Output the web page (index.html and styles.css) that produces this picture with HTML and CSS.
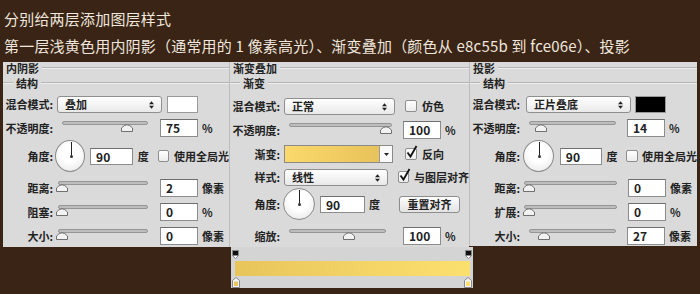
FILE: index.html
```html
<!DOCTYPE html>
<html lang="zh">
<head>
    <meta charset="UTF-8">
    <title>图层样式</title>
    <link rel="stylesheet" href="styles.css">
</head>
<body>
    <div class="title">
        <p>分别给两层添加图层样式</p>
        <p>第一层浅黄色用内阴影（通常用的 1 像素高光）、渐变叠加（颜色从 e8c55b 到 fce06e）、投影</p>
    </div>

    <div class="panels">
        <!-- 内阴影 -->
        <div class="panel inner">
            <div class="head"><span>内阴影</span></div>
            <div class="legend"><span>结构</span></div>
            <div class="row">
                <span class="lbl">混合模式:</span>
                <div class="sel">叠加<svg class="arrows" width="5" height="8" viewBox="0 0 5 8"><path d="M0 3.2 L2.5 0.2 L5 3.2Z M0 4.8 L2.5 7.8 L5 4.8Z" fill="#222"/></svg></div>
                <div class="swatch"></div>
            </div>
            <div class="row">
                <span class="lbl">不透明度:</span>
                <div class="slider op"><div class="track"></div><svg class="thumb" style="left:76%" width="12" height="9" viewBox="0 0 12 9"><path d="M0.5 8.5 V5 Q6 -1.5 11.5 5 V8.5Z" fill="#f2f2f2" stroke="#6f6f6f"/></svg></div>
                <div class="num">75</div>
                <span class="unit">%</span>
            </div>
            <div class="row tall">
                <span class="lbl">角度:</span>
                <div class="dial"><i class="hand"></i><i class="dot"></i></div>
                <div class="num angle">90</div>
                <span class="deg">度</span>
                <div class="check"></div>
                <span class="ctext">使用全局光</span>
            </div>
            <div class="row">
                <span class="lbl">距离:</span>
                <div class="slider"><div class="track"></div><svg class="thumb" style="left:4%" width="12" height="9" viewBox="0 0 12 9"><path d="M0.5 8.5 V5 Q6 -1.5 11.5 5 V8.5Z" fill="#f2f2f2" stroke="#6f6f6f"/></svg></div>
                <div class="num">2</div>
                <span class="unit">像素</span>
            </div>
            <div class="row">
                <span class="lbl">阻塞:</span>
                <div class="slider"><div class="track"></div><svg class="thumb" style="left:4%" width="12" height="9" viewBox="0 0 12 9"><path d="M0.5 8.5 V5 Q6 -1.5 11.5 5 V8.5Z" fill="#f2f2f2" stroke="#6f6f6f"/></svg></div>
                <div class="num">0</div>
                <span class="unit">%</span>
            </div>
            <div class="row">
                <span class="lbl">大小:</span>
                <div class="slider"><div class="track"></div><svg class="thumb" style="left:4%" width="12" height="9" viewBox="0 0 12 9"><path d="M0.5 8.5 V5 Q6 -1.5 11.5 5 V8.5Z" fill="#f2f2f2" stroke="#6f6f6f"/></svg></div>
                <div class="num">0</div>
                <span class="unit">像素</span>
            </div>
        </div>

        <!-- 渐变叠加 -->
        <div class="col">
            <div class="panel middle">
                <div class="head"><span>渐变叠加</span></div>
                <div class="legend"><span>渐变</span></div>
                <div class="row first">
                    <span class="lbl">混合模式:</span>
                    <div class="sel">正常<svg class="arrows" width="5" height="8" viewBox="0 0 5 8"><path d="M0 3.2 L2.5 0.2 L5 3.2Z M0 4.8 L2.5 7.8 L5 4.8Z" fill="#222"/></svg></div>
                    <div class="check"></div>
                    <span class="ctext">仿色</span>
                </div>
                <div class="row">
                    <span class="lbl">不透明度:</span>
                    <div class="slider op"><div class="track"></div><svg class="thumb" style="left:94%" width="12" height="9" viewBox="0 0 12 9"><path d="M0.5 8.5 V5 Q6 -1.5 11.5 5 V8.5Z" fill="#f2f2f2" stroke="#6f6f6f"/></svg></div>
                    <div class="num">100</div>
                    <span class="unit">%</span>
                </div>
                <div class="row">
                    <span class="lbl">渐变:</span>
                    <div class="grad"><div class="grad-fill"></div><div class="grad-drop"><svg width="5" height="3" viewBox="0 0 5 3"><path d="M0 0 H5 L2.5 3Z" fill="#222"/></svg></div></div>
                    <div class="check on"><svg width="13" height="14" viewBox="0 0 13 14"><path d="M2.5 7.5 L5.5 11.5 L11.5 1" fill="none" stroke="#111" stroke-width="1.8"/></svg></div>
                    <span class="ctext">反向</span>
                </div>
                <div class="row short">
                    <span class="lbl">样式:</span>
                    <div class="sel">线性<svg class="arrows" width="5" height="8" viewBox="0 0 5 8"><path d="M0 3.2 L2.5 0.2 L5 3.2Z M0 4.8 L2.5 7.8 L5 4.8Z" fill="#222"/></svg></div>
                    <div class="check on"><svg width="13" height="14" viewBox="0 0 13 14"><path d="M2.5 7.5 L5.5 11.5 L11.5 1" fill="none" stroke="#111" stroke-width="1.8"/></svg></div>
                    <span class="ctext">与图层对齐</span>
                </div>
                <div class="row tall">
                    <span class="lbl">角度:</span>
                    <div class="dial"><i class="hand"></i><i class="dot"></i></div>
                    <div class="num angle">90</div>
                    <span class="deg">度</span>
                    <div class="btn">重置对齐</div>
                </div>
                <div class="row">
                    <span class="lbl">缩放:</span>
                    <div class="slider op"><div class="track"></div><svg class="thumb" style="left:62%" width="12" height="9" viewBox="0 0 12 9"><path d="M0.5 8.5 V5 Q6 -1.5 11.5 5 V8.5Z" fill="#f2f2f2" stroke="#6f6f6f"/></svg></div>
                    <div class="num">100</div>
                    <span class="unit">%</span>
                </div>
            </div>
            <div class="strip">
                <div class="stops">
                    <svg width="7" height="9" viewBox="0 0 7 9"><rect x="0.5" y="0.5" width="6" height="5" fill="#111" stroke="#888"/><path d="M0.5 5.5 H6.5 L3.5 8.5Z" fill="#fff" stroke="#888"/></svg>
                    <svg width="7" height="9" viewBox="0 0 7 9"><rect x="0.5" y="0.5" width="6" height="5" fill="#111" stroke="#888"/><path d="M0.5 5.5 H6.5 L3.5 8.5Z" fill="#fff" stroke="#888"/></svg>
                </div>
                <div class="bar"></div>
                <div class="stops low">
                    <svg width="8" height="11" viewBox="0 0 8 11"><path d="M0.5 10.5 V3.5 L4 0.5 L7.5 3.5 V10.5Z" fill="#f4f4f4" stroke="#888"/><rect x="2" y="4.5" width="4" height="4.5" fill="#e8c55b"/></svg>
                    <svg width="8" height="11" viewBox="0 0 8 11"><path d="M0.5 10.5 V3.5 L4 0.5 L7.5 3.5 V10.5Z" fill="#f4f4f4" stroke="#888"/><rect x="2" y="4.5" width="4" height="4.5" fill="#fce06e"/></svg>
                </div>
            </div>
        </div>

        <!-- 投影 -->
        <div class="panel shadow">
            <div class="head"><span>投影</span></div>
            <div class="legend"><span>结构</span></div>
            <div class="row">
                <span class="lbl">混合模式:</span>
                <div class="sel">正片叠底<svg class="arrows" width="5" height="8" viewBox="0 0 5 8"><path d="M0 3.2 L2.5 0.2 L5 3.2Z M0 4.8 L2.5 7.8 L5 4.8Z" fill="#222"/></svg></div>
                <div class="swatch black"></div>
            </div>
            <div class="row">
                <span class="lbl">不透明度:</span>
                <div class="slider op"><div class="track"></div><svg class="thumb" style="left:14%" width="12" height="9" viewBox="0 0 12 9"><path d="M0.5 8.5 V5 Q6 -1.5 11.5 5 V8.5Z" fill="#f2f2f2" stroke="#6f6f6f"/></svg></div>
                <div class="num">14</div>
                <span class="unit">%</span>
            </div>
            <div class="row tall">
                <span class="lbl">角度:</span>
                <div class="dial"><i class="hand"></i><i class="dot"></i></div>
                <div class="num angle">90</div>
                <span class="deg">度</span>
                <div class="check"></div>
                <span class="ctext">使用全局光</span>
            </div>
            <div class="row">
                <span class="lbl">距离:</span>
                <div class="slider"><div class="track"></div><svg class="thumb" style="left:5%" width="12" height="9" viewBox="0 0 12 9"><path d="M0.5 8.5 V5 Q6 -1.5 11.5 5 V8.5Z" fill="#f2f2f2" stroke="#6f6f6f"/></svg></div>
                <div class="num">0</div>
                <span class="unit">像素</span>
            </div>
            <div class="row">
                <span class="lbl">扩展:</span>
                <div class="slider"><div class="track"></div><svg class="thumb" style="left:5%" width="12" height="9" viewBox="0 0 12 9"><path d="M0.5 8.5 V5 Q6 -1.5 11.5 5 V8.5Z" fill="#f2f2f2" stroke="#6f6f6f"/></svg></div>
                <div class="num">0</div>
                <span class="unit">%</span>
            </div>
            <div class="row">
                <span class="lbl">大小:</span>
                <div class="slider op"><div class="track"></div><svg class="thumb" style="left:17%" width="12" height="9" viewBox="0 0 12 9"><path d="M0.5 8.5 V5 Q6 -1.5 11.5 5 V8.5Z" fill="#f2f2f2" stroke="#6f6f6f"/></svg></div>
                <div class="num">27</div>
                <span class="unit">像素</span>
            </div>
        </div>
    </div>
</body>
</html>
```

FILE: styles.css
```css
body {
    margin: 0;
    background: #3a2416;
    font-family: "Noto Sans CJK SC", "Liberation Sans", sans-serif;
    overflow: hidden;
}

.title {
    padding: 5px 0 0 4px;
    color: #efe7dd;
    font-size: 15px;
    line-height: 27px;
    letter-spacing: 0.2px;
}
.title p {
    margin: 0;
    white-space: nowrap;
}

.panels {
    display: flex;
    align-items: flex-start;
    margin: 3px 0 0 3px;
}

.panel {
    background: #dadada;
    height: 185px;
    box-sizing: border-box;
    font-size: 11px;
    font-weight: bold;
    color: #222222;
    white-space: nowrap;
}
.inner { width: 226px; }
.col { width: 240px; }
.middle {
    width: 240px;
    border-left: 1px solid #bcbcbc;
}
.shadow {
    width: 228px;
    height: 184px;
    border-left: 1px solid #bcbcbc;
}

/* headers and legends with rules */
.head {
    display: flex;
    align-items: center;
    height: 12px;
    line-height: 12px;
    padding-left: 3px;
}
.head::after, .legend::after, .legend::before {
    content: "";
    border-top: 1px solid #b4b4b4;
    border-bottom: 1px solid #eeeeee;
}
.head::after {
    flex: 1;
    margin-left: 3px;
}
.legend {
    display: flex;
    align-items: center;
    height: 18px;
}
.legend::before {
    width: 10px;
    margin-right: 3px;
}
.legend::after {
    flex: 1;
    margin-left: 3px;
}

/* rows */
.row {
    display: flex;
    align-items: center;
    height: 24px;
}
.row.tall {
    height: 32px;
    margin-bottom: 4px;
}
.row.short { height: 22px; }
.middle .row.first { margin-top: 2px; }

.lbl {
    width: 50px;
    flex: none;
    text-align: right;
}

.sel {
    position: relative;
    margin-left: 4px;
    width: 105px;
    height: 17px;
    box-sizing: border-box;
    border: 1px solid #8f8f8f;
    border-radius: 3px;
    background: linear-gradient(#ffffff, #e9e9e9);
    padding-left: 7px;
    line-height: 15px;
}
.arrows {
    position: absolute;
    right: 7px;
    top: 4px;
}

.swatch {
    margin-left: 5px;
    width: 31px;
    height: 17px;
    box-sizing: border-box;
    border: 1px solid #9a9a9a;
    background: #ffffff;
}
.swatch.black { background: #000000; }

.slider {
    position: relative;
    margin-left: 5px;
    width: 90px;
    height: 11px;
    align-self: center;
    margin-bottom: 5px;
}
.slider.op {
    margin-left: 9px;
    width: 86px;
}
.track {
    height: 4px;
    margin-top: 1px;
    box-sizing: border-box;
    border: 1px solid #959595;
    border-radius: 2px;
    background: #bdbdbd;
}
.thumb {
    position: absolute;
    top: 3px;
    transform: translateX(-50%);
}

.num {
    margin-left: 12px;
    width: 38px;
    height: 18px;
    box-sizing: border-box;
    border: 1px solid #8c8c8c;
    border-top-color: #6f6f6f;
    background: #ffffff;
    padding-left: 5px;
    font-size: 12px;
    line-height: 16px;
}
.num.angle {
    margin-left: 5px;
    width: 45px;
    height: 17px;
    line-height: 15px;
}
.unit { margin-left: 4px; }
.deg { margin-left: 5px; }

.dial {
    position: relative;
    margin-left: 2px;
    width: 32px;
    height: 32px;
    box-sizing: border-box;
    border: 1px solid #8a8a8a;
    border-radius: 50%;
    background: radial-gradient(circle at 50% 40%, #ffffff 40%, #e2e2e2);
}
.hand {
    position: absolute;
    left: 15px;
    top: 1px;
    width: 1px;
    height: 14px;
    background: #222;
}
.dot {
    position: absolute;
    left: 14px;
    top: 14px;
    width: 3px;
    height: 3px;
    border-radius: 50%;
    background: #333;
}

.check {
    position: relative;
    margin-left: 9px;
    width: 12px;
    height: 12px;
    box-sizing: border-box;
    border: 1px solid #8e8e8e;
    border-radius: 2px;
    background: linear-gradient(#ffffff, #ececec);
}
.check svg {
    position: absolute;
    left: -1px;
    top: -4px;
}
.ctext { margin-left: 5px; }

.btn {
    margin-left: 19px;
    width: 61px;
    height: 17px;
    box-sizing: border-box;
    border: 1px solid #8d8d8d;
    border-radius: 3px;
    background: linear-gradient(#fdfdfd, #e3e3e3);
    text-align: center;
    line-height: 15px;
}

/* panel-specific spacing */
.middle .sel { width: 111px; }
.middle .sel + .check { margin-left: 10px; }
.middle .slider.op { width: 103px; }
.middle .slider + .num { margin-left: 11px; }
.middle .row:last-child .slider { width: 97px; }
.middle .row:last-child .num { margin-left: 17px; }
.middle .dial { margin-left: 3px; }
.middle .deg { margin-left: 4px; }

.grad {
    display: flex;
    margin-left: 4px;
    width: 109px;
    height: 18px;
    box-sizing: border-box;
    border: 1px solid #8a8a8a;
}
.grad-fill {
    flex: 1;
    background: linear-gradient(90deg, #fbd96c, #e8c25a);
}
.grad-drop {
    width: 12px;
    border-left: 1px solid #9a9a9a;
    background: #fafafa;
    display: flex;
    align-items: center;
    justify-content: center;
}
.grad + .check { margin-left: 12px; }

.shadow .sel { margin-left: 6px; }
.shadow .swatch { margin-left: 4px; }
.shadow .dial { margin-left: 3px; }
.shadow .num.angle { margin-left: 6px; width: 44px; }
.shadow .deg { margin-left: 4px; }
.shadow .slider { margin-left: 4px; width: 93px; }
.shadow .slider + .num { margin-left: 11px; }
.shadow .slider.op { margin-left: 9px; width: 87px; }
.shadow .ctext { margin-left: 4px; }

/* gradient editor strip */
.strip {
    margin-left: 2px;
    width: 242px;
    height: 41px;
    box-sizing: border-box;
    padding: 3px 1px 0 1px;
    background: #d4d4d4;
}
.stops {
    display: flex;
    justify-content: space-between;
    height: 9px;
}
.stops svg { display: block; }
.stops.low {
    height: 11px;
    margin-top: 1px;
}
.bar {
    margin: 2px 2px 0 3px;
    height: 15px;
    background: linear-gradient(90deg, #e8c55b, #fce06e);
}
```
